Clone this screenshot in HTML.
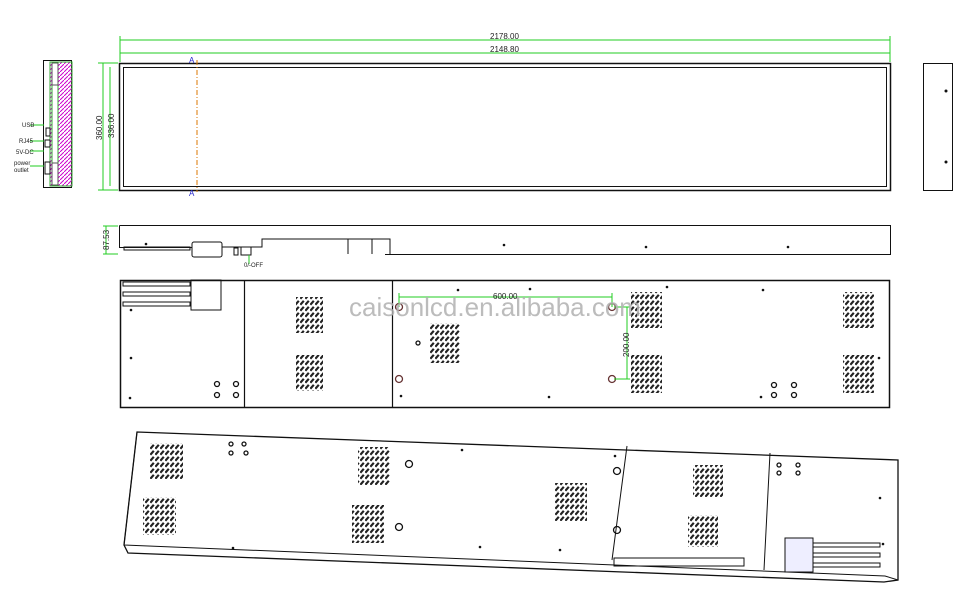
<!DOCTYPE html>
<html><head><meta charset="utf-8"><style>
html,body{margin:0;padding:0;background:#fff;width:979px;height:609px;overflow:hidden}
svg{display:block}
text{font-family:"Liberation Sans",sans-serif}
</style></head><body>
<svg width="979" height="609" viewBox="0 0 979 609" xmlns="http://www.w3.org/2000/svg">
<defs>
<pattern id="v" width="5" height="6" patternUnits="userSpaceOnUse">
<path d="M0.3 4.8 L3.8 0.8" stroke="#222" stroke-width="2.2"/>
</pattern>
<pattern id="h" width="4" height="4" patternUnits="userSpaceOnUse">
<path d="M0 4 L4 0" stroke="#c0c" stroke-width="1"/>
</pattern>
</defs>
<g fill="none" stroke="#111" stroke-width="1">
<rect x="119.5" y="63.5" width="771" height="127" stroke-width="1.5"/>
<rect x="123.5" y="67.5" width="763" height="119"/>
<rect x="923.5" y="63.5" width="29" height="127"/>
<rect x="43.5" y="60.5" width="28" height="127"/>
<rect x="50" y="62" width="22" height="124" fill="url(#h)" stroke="#3a3"/>
<rect x="52" y="62" width="6" height="124" fill="#fff" stroke="#3a3"/>
<rect x="52" y="163" width="6" height="22" fill="#fff" stroke="#555"/>
<rect x="52" y="63" width="6" height="22" fill="#fff" stroke="#555"/>
<rect x="46" y="128" width="4" height="8"/><rect x="45" y="140" width="5" height="7"/><rect x="45" y="162" width="5" height="12"/>
<path d="M119.5 225.5 H890.5 V254.5 H385 M119.5 225.5 V247.5 H192"/>
<rect x="124" y="247" width="66" height="3"/>
<rect x="192" y="242" width="30" height="15" rx="2"/>
<path d="M222 247 H262 V239 H390 V254"/>
<path d="M348 239 V254 M372 239 V254"/>
<rect x="234" y="248" width="4" height="7"/><rect x="241" y="247" width="10" height="8"/>
<rect x="120.5" y="280.5" width="769" height="127" stroke-width="1.5"/>
<path d="M244.5 281 V407 M392.5 281 V407" stroke-width="1.2"/>
<rect x="123" y="282" width="67" height="4"/><rect x="123" y="292" width="67" height="4"/><rect x="123" y="302" width="67" height="4"/>
<rect x="191" y="280" width="30" height="30"/>
<path d="M137 432 L898 460 L898 580 L884 582 L128 553 L124 545 Z" stroke-width="1.3"/>
<path d="M124 545 L885 576 L898 580 M137 432 L124 545"/>
<path d="M627 446 L612 560 M770 453 L764 570"/>
<rect x="614" y="558" width="130" height="8"/>
<rect x="785" y="538" width="28" height="34" fill="#eef"/>
<rect x="813" y="543" width="67" height="4"/><rect x="813" y="553" width="67" height="4"/><rect x="813" y="563" width="67" height="4"/>
</g>
<g fill="url(#v)">
<rect x="296" y="297" width="27" height="36"/><rect x="296" y="355" width="27" height="36"/>
<rect x="430" y="323" width="30" height="40"/>
<rect x="631" y="292" width="31" height="36"/><rect x="631" y="355" width="31" height="38"/>
<rect x="843" y="292" width="31" height="36"/><rect x="843" y="355" width="31" height="38"/>
<rect x="150" y="443" width="33" height="36"/><rect x="143" y="497" width="33" height="38"/>
<rect x="358" y="447" width="32" height="38"/><rect x="352" y="505" width="32" height="38"/>
<rect x="555" y="483" width="32" height="38"/>
<rect x="693" y="465" width="30" height="32"/><rect x="688" y="515" width="30" height="32"/>
</g>
<g fill="#111">
<circle cx="946" cy="91" r="1.5"/><circle cx="946" cy="162" r="1.5"/>
<circle cx="146" cy="244" r="1.3"/><circle cx="504" cy="245" r="1.3"/><circle cx="646" cy="247" r="1.3"/><circle cx="788" cy="247" r="1.3"/>
<circle cx="131" cy="310" r="1.3"/><circle cx="131" cy="358" r="1.3"/><circle cx="130" cy="398" r="1.3"/>
<circle cx="458" cy="290" r="1.3"/><circle cx="530" cy="289" r="1.3"/><circle cx="401" cy="396" r="1.3"/><circle cx="549" cy="397" r="1.3"/>
<circle cx="667" cy="287" r="1.3"/><circle cx="763" cy="290" r="1.3"/><circle cx="879" cy="358" r="1.3"/><circle cx="761" cy="397" r="1.3"/>
<circle cx="462" cy="450" r="1.3"/><circle cx="615" cy="456" r="1.3"/><circle cx="233" cy="548" r="1.3"/><circle cx="480" cy="547" r="1.3"/><circle cx="560" cy="550" r="1.3"/><circle cx="880" cy="498" r="1.3"/><circle cx="883" cy="544" r="1.3"/>
</g>
<g fill="none" stroke="#111" stroke-width="1.3">
<circle cx="217" cy="384" r="2.5"/><circle cx="236" cy="384" r="2.5"/><circle cx="217" cy="395" r="2.5"/><circle cx="236" cy="395" r="2.5"/>
<circle cx="774" cy="385" r="2.5"/><circle cx="794" cy="385" r="2.5"/><circle cx="774" cy="395" r="2.5"/><circle cx="794" cy="395" r="2.5"/>
<circle cx="418" cy="343" r="2"/>
<circle cx="399" cy="307" r="3.5" stroke="#633"/><circle cx="399" cy="379" r="3.5" stroke="#633"/><circle cx="612" cy="307" r="3.5" stroke="#633"/><circle cx="612" cy="379" r="3.5" stroke="#633"/>
<circle cx="409" cy="464" r="3.5"/><circle cx="399" cy="527" r="3.5"/><circle cx="617" cy="471" r="3.5"/><circle cx="617" cy="530" r="3.5"/>
<circle cx="231" cy="444" r="2"/><circle cx="244" cy="444" r="2"/><circle cx="231" cy="453" r="2"/><circle cx="246" cy="453" r="2"/>
<circle cx="779" cy="465" r="2"/><circle cx="779" cy="473" r="2"/><circle cx="798" cy="465" r="2"/><circle cx="798" cy="473" r="2"/>
</g>
<g stroke="#2c2" stroke-width="1" fill="none">
<path d="M120 40 H890 M120 53 H890 M120 36 V62 M890 36 V62"/>
<path d="M98 63 H118 M98 190 H118 M103 63 V190 M110 67 V186"/>
<path d="M103 226 H118 M103 254 H118 M106 226 V254"/>
<path d="M399 297 H612 M399 293 V307 M612 293 V307"/>
<path d="M627 307 V379 M614 307 H630 M614 379 H630"/>
<path d="M249 255 V264"/>
<path d="M30 125 H44 M30 141 H44 M30 151 H44 M30 166 H44"/>
</g>
<path d="M197 60 V192" stroke="#d70" stroke-width="1" stroke-dasharray="5,2,1,2"/>
<g font-size="8" fill="#222">
<text x="490" y="39">2178.00</text>
<text x="490" y="52">2148.80</text>
<text x="493" y="299">600.00</text>
<text transform="translate(102,140) rotate(-90)">360.00</text>
<text transform="translate(114,138) rotate(-90)">336.00</text>
<text transform="translate(109,250) rotate(-90)">87.53</text>
<text transform="translate(629,357) rotate(-90)">200.00</text>
</g>
<g font-size="6" fill="#222" font-family="Liberation Serif">
<text x="244" y="267">0/-OFF</text>
<text x="22" y="127">USB</text><text x="19" y="143">RJ45</text><text x="16" y="154">5V-DC</text>
<text x="14" y="165">power</text><text x="14" y="172">outlet</text>
</g>
<g fill="#22c" font-size="8"><text x="189" y="63">A</text><text x="189" y="196">A</text></g>
<text x="349" y="316" font-size="26" fill="#b0b0b0" fill-opacity="0.85">caisonlcd.en.alibaba.com</text>
</svg>
</body></html>
